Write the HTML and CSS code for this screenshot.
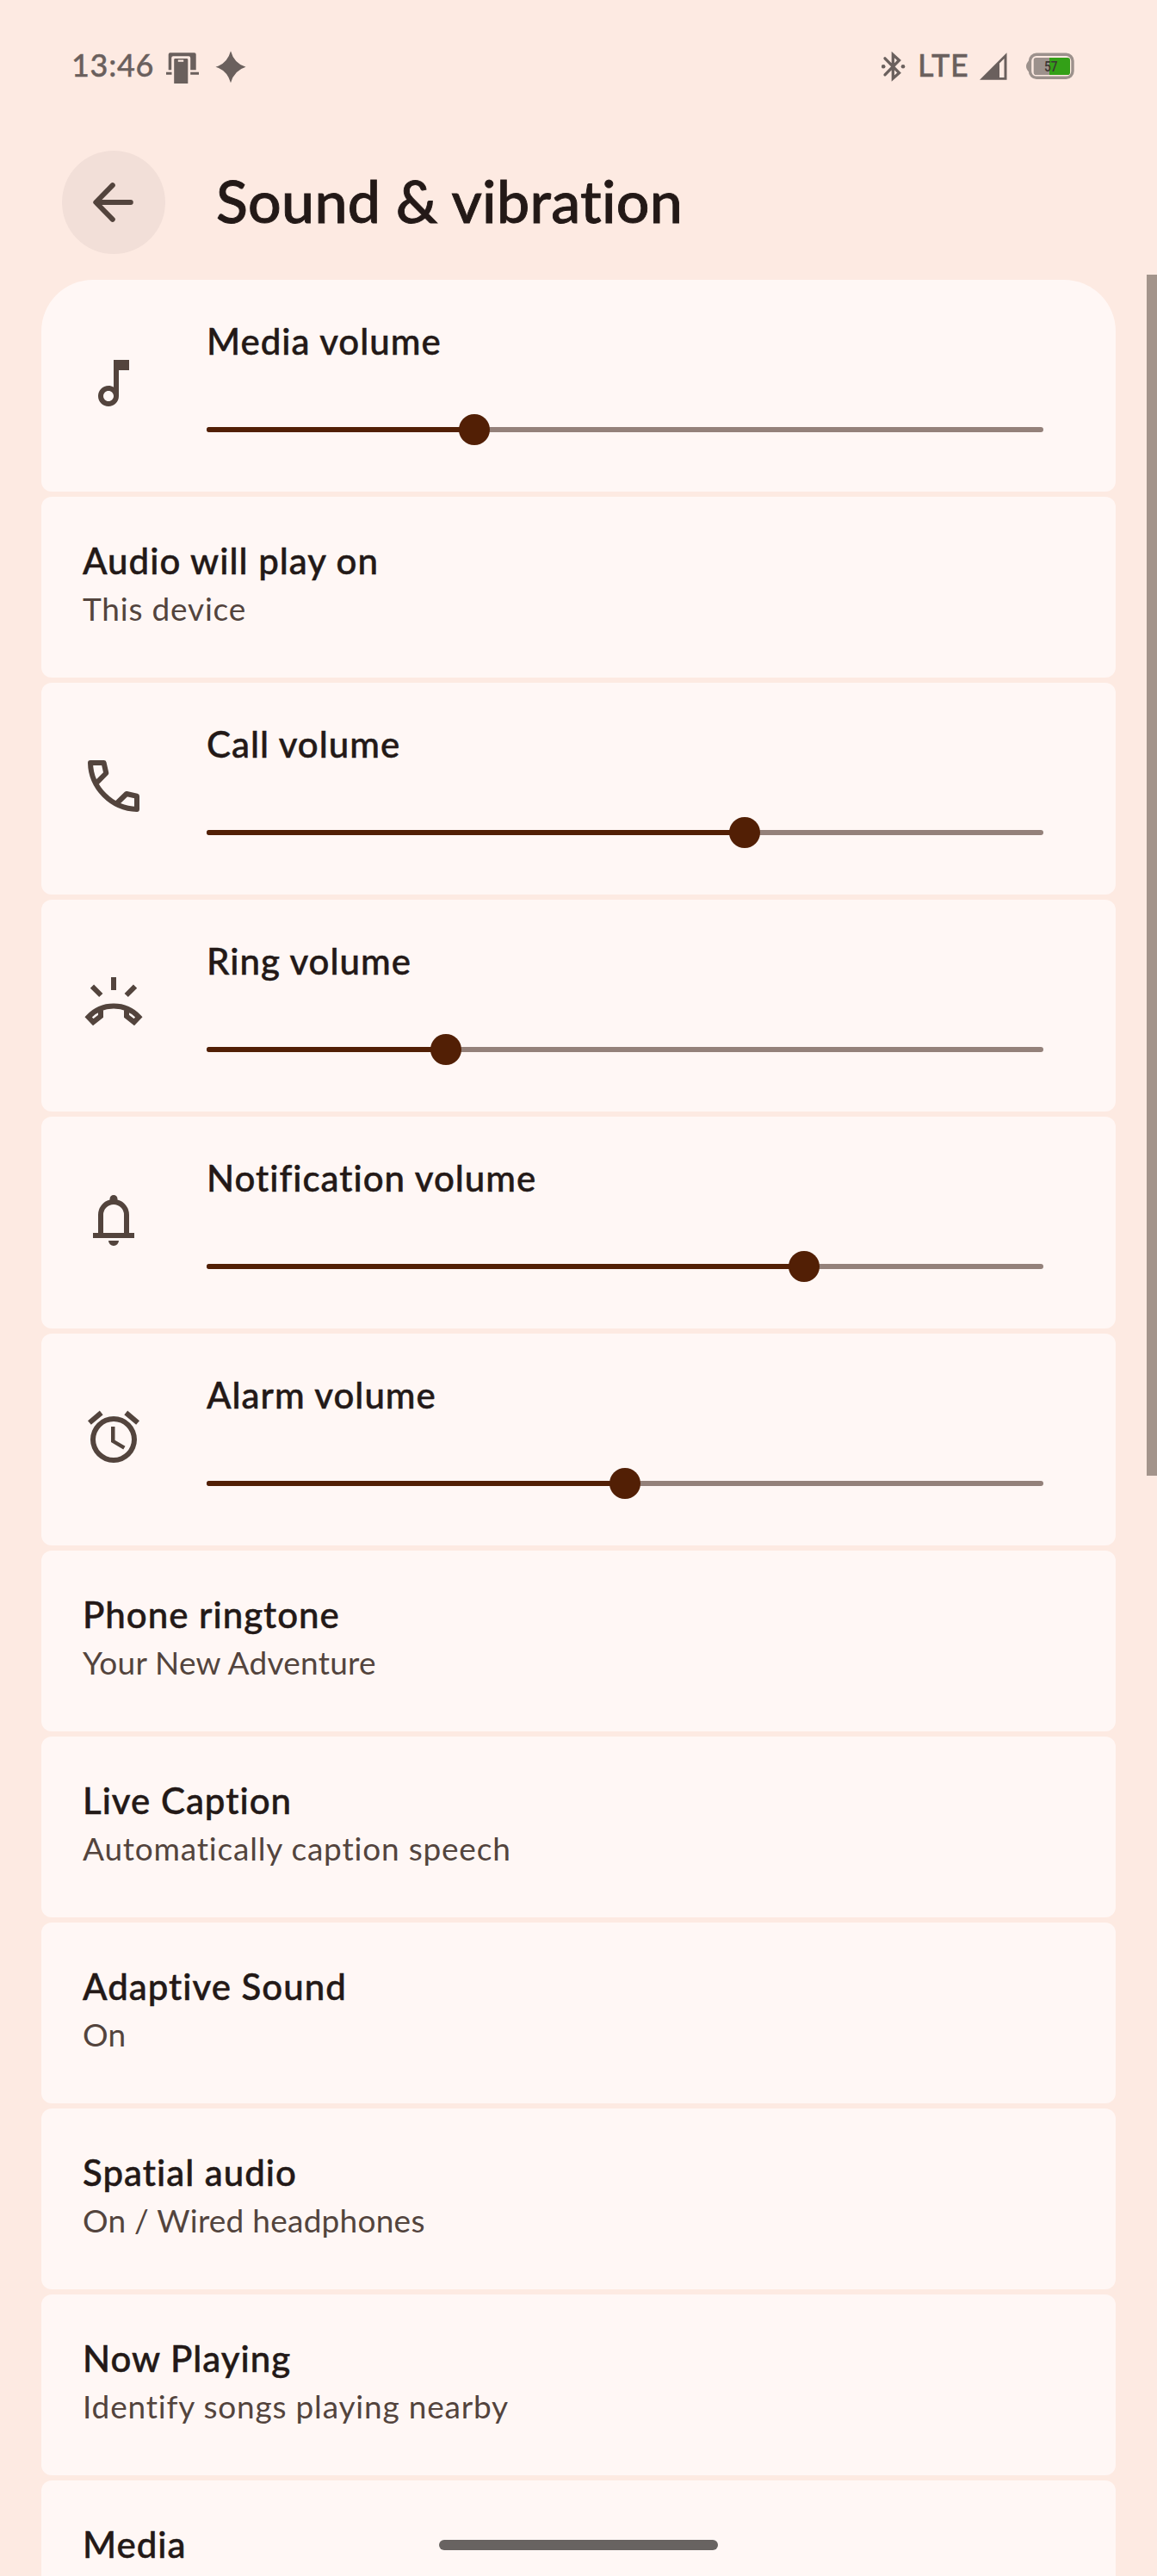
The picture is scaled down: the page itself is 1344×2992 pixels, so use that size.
FILE: index.html
```html
<!DOCTYPE html>
<html lang="en">
<head>
<meta charset="utf-8">
<title>Sound &amp; vibration</title>
<link rel="stylesheet" href="styles.css">
</head>
<body>
<div class="screen">
  <div class="status-bar">
    <div class="status-left">
      <span class="time">13:46</span>
      <svg class="icon-cast" width="38" height="44" viewBox="0 0 38 44"><path d="M2.7 28.3V10.3q0-2 2-2h28q2 0 2 2v18H28.2v-14q0-2-2-2H8.200q-2 0-2 2v14z"/><path d="M0 30.800h6.500v3H0zM28.200 30.800H38v3h-9.800z"/><path d="M10.500 15h13.500q1.300 0 1.300 1.300V44H9.200V16.300q0-1.300 1.300-1.300zm3.300 1.500v2.200h6.400v-2.200z"/></svg>
      <svg class="icon-spark" width="36" height="44" viewBox="0 0 36 44"><path d="M18 6.200Q22 20.700 35.500 24.700Q22 28.700 18 43.200Q14 28.700 .5 24.700Q14 20.700 18 6.200z"/></svg>
    </div>
    <div class="status-right">
      <svg class="icon-bt" width="28" height="44" viewBox="0 0 28 44"><path d="M4 14.800L20.500 31.700L13.300 38V10.500L20.500 17L4 33.800"/><circle cx="2.200" cy="24.300" r="2.300"/><circle cx="25" cy="24.300" r="2.300"/></svg>
      <span class="network">LTE</span>
      <svg class="icon-signal" width="32" height="44" viewBox="0 0 32 44"><path fill-rule="evenodd" d="M0 39.700L31.500 8.300V39.700zM23 20.500V37h5.500V15z"/></svg>
      <svg class="icon-battery" width="57" height="44" viewBox="0 0 57 44"><path class="shell" d="M4 17Q0 20 0 24t4 7z"/><rect class="ring" x="4.500" y="10.300" width="49.500" height="27" rx="7.500"/><path class="shell" d="M11.500 14H27v20H11.500q-2.800 0-2.800-2.800V16.800q0-2.800 2.800-2.800z"/><path class="charge" d="M27 14h21.200q2.800 0 2.800 2.800v14.400q0 2.800-2.800 2.800H27z"/><text x="21" y="30.300" textLength="15.500" lengthAdjust="spacingAndGlyphs">57</text></svg>
    </div>
  </div>

  <header class="header">
    <div class="back"><svg width="72" height="72" viewBox="0 0 24 24"><path d="M18.600 12H5.200M11.600 5.400L5.100 12l6.500 6.600"/></svg></div>
    <h1>Sound &amp; vibration</h1>
  </header>

  <main class="list">
    <section class="card volume">
      <svg class="glyph" viewBox="0 0 24 24"><path d="M12 3l.01 10.550c-.59-.34-1.270-.55-2-.55C7.790 13 6 14.790 6 17s1.790 4 4.010 4S14 19.210 14 17V7h4V3h-6zm-1.990 16c-1.100 0-2-.9-2-2s.9-2 2-2 2 .9 2 2-.9 2-2 2z"/></svg>
      <div class="control"><h2>Media volume</h2><div class="slider"><div class="fill" style="width:32%"></div></div></div>
    </section>
    <section class="card entry"><h2>Audio will play on</h2><p>This device</p></section>
    <section class="card volume">
      <svg class="glyph line round" viewBox="0 0 24 24"><path d="M5.500 10.600L9.100 7L8.200 3H3C3.200 12.700 11.300 20.800 21 21V15.900L17 15L13.400 18.500"/></svg>
      <div class="control"><h2>Call volume</h2><div class="slider"><div class="fill" style="width:64.3%"></div></div></div>
    </section>
    <section class="card volume">
      <svg class="glyph line" viewBox="0 0 24 24"><path d="M12 2V7M3.650 5.550L7.100 9M20.350 5.550L16.900 9"/><path d="M7 14.200V17.100L4.100 19.400L2.200 17.400C7.400 11.700 16.600 11.700 21.800 17.400L19.900 19.400L17 17.100V14.200"/></svg>
      <div class="control"><h2>Ring volume</h2><div class="slider"><div class="fill" style="width:28.6%"></div></div></div>
    </section>
    <section class="card volume">
      <svg class="glyph" viewBox="0 0 24 24"><path d="M4 19v-2h2v-7q0-2.075 1.250-3.688T10.500 4.200V3.800q0-.625.438-1.062T12 2.300t1.063.438T13.500 3.800v.4q2 .5 3.250 2.113T18 10v7h2v2zM12 22q-.825 0-1.412-.587T10 20h4q0 .825-.587 1.413T12 22zM8 17h8v-7q0-1.650-1.175-2.825T12 6T9.175 7.175T8 10z"/></svg>
      <div class="control"><h2>Notification volume</h2><div class="slider"><div class="fill" style="width:71.4%"></div></div></div>
    </section>
    <section class="card volume">
      <svg class="glyph" viewBox="0 0 24 24"><path d="M22 5.720l-4.600-3.860-1.290 1.530 4.600 3.860zM7.880 3.390L6.600 1.860 2 5.710l1.290 1.530zM12.500 8H11v6l4.750 2.850.75-1.230-4-2.370zM12 4a9 9 0 1 0 0 18a9 9 0 0 0 0-18zm0 16a7 7 0 1 1 0-14a7 7 0 0 1 0 14z"/></svg>
      <div class="control"><h2>Alarm volume</h2><div class="slider"><div class="fill" style="width:50%"></div></div></div>
    </section>
    <section class="card entry"><h2>Phone ringtone</h2><p class="snug">Your New Adventure</p></section>
    <section class="card entry"><h2>Live Caption</h2><p>Automatically caption speech</p></section>
    <section class="card entry"><h2>Adaptive Sound</h2><p class="snug">On</p></section>
    <section class="card entry"><h2>Spatial audio</h2><p class="snug">On / Wired headphones</p></section>
    <section class="card entry"><h2>Now Playing</h2><p>Identify songs playing nearby</p></section>
    <section class="card entry"><h2>Media</h2></section>
  </main>

  <div class="scrollbar"></div>
  <div class="home-bar"></div>
</div>
</body>
</html>
```
FILE: styles.css
```css
* { box-sizing: border-box; margin: 0; padding: 0; }

body {
  background: #fdeae2;
  font-family: Lato, "Open Sans", sans-serif;
  font-variant-ligatures: none;
}

.screen {
  position: relative;
  display: flex;
  flex-direction: column;
  width: 1344px;
  height: 2992px;
  overflow: hidden;
  background: #fdeae2;
}

svg { display: block; flex: none; }

/* Status bar */
.status-bar {
  flex: none;
  display: flex;
  justify-content: space-between;
  height: 175px;
  padding: 53px 95px 0 83px;
  color: #6a605d;
  font-size: 36px;
  font-weight: 500;
  line-height: 44px;
  letter-spacing: 0.7px;
}
.status-bar svg { fill: #6a605d; }
.status-left, .status-right { display: flex; height: 44px; }
.time, .network { -webkit-text-stroke: 0.4px #6a605d; }
.time { width: 110px; }
.icon-spark { margin-left: 19px; }
.status-bar .icon-bt { margin-right: 14px; }
.icon-bt path { fill: none; stroke: #6a605d; stroke-width: 3.3; stroke-linejoin: miter; stroke-linecap: round; }
.network { width: 72px; }
.icon-battery { margin-left: 22px; }
.icon-battery .shell { fill: #9c918c; }
.icon-battery .ring { fill: none; stroke: #9c918c; stroke-width: 3.4; }
.icon-battery .charge { fill: #33a017; }
.icon-battery text { fill: #3b3533; font: 500 17px Roboto, sans-serif; letter-spacing: 0; }

/* Header */
.header {
  flex: none;
  display: flex;
  align-items: center;
  gap: 59px;
  height: 120px;
  margin-bottom: 30px;
  padding-left: 72px;
}
.back {
  display: flex;
  align-items: center;
  justify-content: center;
  width: 120px;
  height: 120px;
  border-radius: 50%;
  background: #f2dfd8;
}
.back path { fill: none; stroke: #53443d; stroke-width: 2; stroke-linecap: round; stroke-linejoin: round; }
h1 {
  margin-top: -4px;
  color: #231917;
  font-size: 68px;
  font-weight: 500;
  line-height: 80px;
  letter-spacing: 0.3px;
  -webkit-text-stroke: 0.9px #231917;
}

/* Settings list */
.list {
  display: flex;
  flex-direction: column;
  gap: 6px;
  padding: 0 48px;
}
.card { flex: none; border-radius: 12px; background: #fff7f5; }
.card:first-child { border-radius: 60px 60px 12px 12px; }
h2 {
  color: #231917;
  font-size: 42px;
  font-weight: 500;
  line-height: 50px;
  letter-spacing: 1px;
  -webkit-text-stroke: 0.5px #231917;
}
.entry { height: 210px; padding: 49px 48px 0; }
.entry p {
  margin-top: 7px;
  color: #53443d;
  font-size: 37px;
  line-height: 48px;
  letter-spacing: 0.8px;
}
.entry .snug { letter-spacing: 0.25px; }
.volume { display: flex; gap: 72px; height: 246px; padding: 46px 84px 0 48px; }
.glyph { width: 72px; height: 72px; margin-top: 38px; fill: #53443d; }
.glyph.line { fill: none; stroke: #53443d; stroke-width: 2; }
.glyph.round { stroke-linejoin: round; }
.control { flex: 1; }
.slider { height: 6px; margin-top: 75px; border-radius: 3px; background: #94817a; }
.fill { position: relative; height: 6px; border-radius: 3px; background: #521f05; }
.fill::after {
  content: "";
  position: absolute;
  top: -15px;
  right: -18px;
  width: 36px;
  height: 36px;
  border-radius: 50%;
  background: #521f05;
}

/* Overlays */
.scrollbar { position: absolute; top: 319px; right: 0; width: 12px; height: 1395px; background: #a3948b; }
.home-bar { position: absolute; top: 2950px; left: 510px; width: 324px; height: 12px; border-radius: 6px; background: #686361; }
```
